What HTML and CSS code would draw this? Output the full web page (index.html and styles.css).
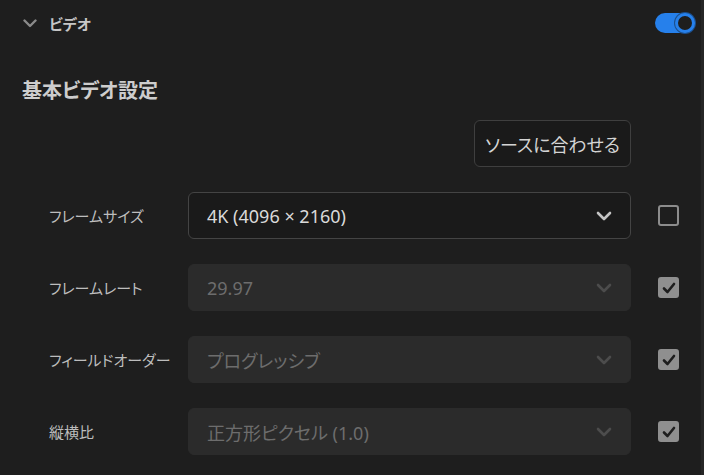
FILE: index.html
```html
<!DOCTYPE html>
<html lang="ja">
<head>
    <meta charset="UTF-8">
    <title>ビデオ設定</title>
    <link rel="stylesheet" href="styles.css">
</head>
<body>
    <div class="window">
        <div class="panel">
            <!-- section header -->
            <div class="section-head">
                <svg class="head-chevron" width="14" height="9" viewBox="0 0 14 9">
                    <path d="M1.5 1.5 L7 7 L12.5 1.5" fill="none" stroke="#8a8a8a" stroke-width="2.4" stroke-linecap="round" stroke-linejoin="round"/>
                </svg>
                <span class="section-title">ビデオ</span>
                <div class="toggle on"><span class="knob"></span></div>
            </div>

            <h2 class="group-title">基本ビデオ設定</h2>

            <div class="form">
                <div class="actions">
                    <button class="btn">ソースに合わせる</button>
                </div>

                <label class="label">フレームサイズ</label>
                <div class="select">
                    <span class="value">4K (4096 × 2160)</span>
                    <svg class="chevron" width="16" height="10" viewBox="0 0 16 10">
                        <path d="M2 2 L8 8 L14 2" fill="none" stroke-width="2.6" stroke-linecap="round" stroke-linejoin="round"/>
                    </svg>
                </div>
                <span class="checkbox"></span>

                <label class="label">フレームレート</label>
                <div class="select disabled">
                    <span class="value">29.97</span>
                    <svg class="chevron" width="16" height="10" viewBox="0 0 16 10">
                        <path d="M2 2 L8 8 L14 2" fill="none" stroke-width="2.6" stroke-linecap="round" stroke-linejoin="round"/>
                    </svg>
                </div>
                <span class="checkbox checked">
                    <svg width="14" height="12" viewBox="0 0 14 12"><path d="M2 6.5 L5.5 10 L12 2" fill="none" stroke="#1e1e1e" stroke-width="2.6" stroke-linecap="round" stroke-linejoin="round"/></svg>
                </span>

                <label class="label">フィールドオーダー</label>
                <div class="select disabled">
                    <span class="value">プログレッシブ</span>
                    <svg class="chevron" width="16" height="10" viewBox="0 0 16 10">
                        <path d="M2 2 L8 8 L14 2" fill="none" stroke-width="2.6" stroke-linecap="round" stroke-linejoin="round"/>
                    </svg>
                </div>
                <span class="checkbox checked">
                    <svg width="14" height="12" viewBox="0 0 14 12"><path d="M2 6.5 L5.5 10 L12 2" fill="none" stroke="#1e1e1e" stroke-width="2.6" stroke-linecap="round" stroke-linejoin="round"/></svg>
                </span>

                <label class="label">縦横比</label>
                <div class="select disabled">
                    <span class="value">正方形ピクセル (1.0)</span>
                    <svg class="chevron" width="16" height="10" viewBox="0 0 16 10">
                        <path d="M2 2 L8 8 L14 2" fill="none" stroke-width="2.6" stroke-linecap="round" stroke-linejoin="round"/>
                    </svg>
                </div>
                <span class="checkbox checked">
                    <svg width="14" height="12" viewBox="0 0 14 12"><path d="M2 6.5 L5.5 10 L12 2" fill="none" stroke="#1e1e1e" stroke-width="2.6" stroke-linecap="round" stroke-linejoin="round"/></svg>
                </span>
            </div>
        </div>
        <div class="track"></div>
    </div>
</body>
</html>
```

FILE: styles.css
```css
body {
    margin: 0;
    padding: 0;
    background: #1e1e1e;
    font-family: "Noto Sans CJK JP", "Noto Sans", sans-serif;
    font-feature-settings: "palt";
    color: #c8c8c8;
}
.window {
    display: flex;
    height: 475px;
    overflow: hidden;
}
.panel {
    flex: 1;
}
.track {
    width: 3px;
    background: #262626;
}

/* header */
.section-head {
    display: flex;
    align-items: center;
    height: 46px;
    padding: 0 6px 0 23px;
}
.head-chevron {
    margin-right: 12px;
}
.section-title {
    font-size: 15px;
    font-weight: bold;
    color: #c6c6c6;
    flex: 1;
}
.toggle {
    width: 40px;
    height: 20px;
    border-radius: 10px;
    background: #2680eb;
    display: flex;
    align-items: center;
    justify-content: flex-end;
}
.knob {
    width: 14px;
    height: 14px;
    border-radius: 50%;
    background: #1e1e1e;
    border: 3px solid #2680eb;
    box-shadow: 0 0 0 1px #1c4f8c;
}

.group-title {
    margin: 30px 0 0 22px;
    font-size: 20px;
    font-weight: bold;
    line-height: 28px;
    color: #cdcdcd;
}

/* form rows */
.form {
    display: grid;
    grid-template-columns: 139px 443px 48px;
    grid-auto-rows: 47px;
    row-gap: 25px;
    margin: 16px 0 0 49px;
    align-items: center;
}
.actions {
    grid-column: 1 / -1;
    display: flex;
    justify-content: flex-end;
    padding-right: 48px;
}
.btn {
    height: 47px;
    padding: 0 10px;
    background: #1a1a1a;
    border: 1px solid #3f3f3f;
    border-radius: 6px;
    color: #d4d4d4;
    font-family: inherit;
    font-feature-settings: "palt";
    font-size: 18px;
}
.label {
    font-size: 15px;
    color: #bdbdbd;
    white-space: nowrap;
}
.select {
    height: 47px;
    box-sizing: border-box;
    display: flex;
    align-items: center;
    padding: 0 18px 0 18px;
    background: #1a1a1a;
    border: 1px solid #444;
    border-radius: 6px;
}
.select .value {
    flex: 1;
    font-family: "Noto Sans", "Noto Sans CJK JP", sans-serif;
    font-size: 18px;
    color: #dadada;
}
.select .chevron path {
    stroke: #c4c4c4;
}
.select.disabled {
    background: #2b2b2b;
    border-color: #2b2b2b;
}
.select.disabled .value {
    color: #6d6d6d;
}
.select.disabled .chevron path {
    stroke: #4c4c4c;
}
.checkbox {
    justify-self: end;
    width: 21px;
    height: 21px;
    box-sizing: border-box;
    border: 2.5px solid #8c8c8c;
    border-radius: 3px;
    display: flex;
    align-items: center;
    justify-content: center;
}
.checkbox.checked {
    background: #8f8f8f;
    border-color: #8f8f8f;
}
```
